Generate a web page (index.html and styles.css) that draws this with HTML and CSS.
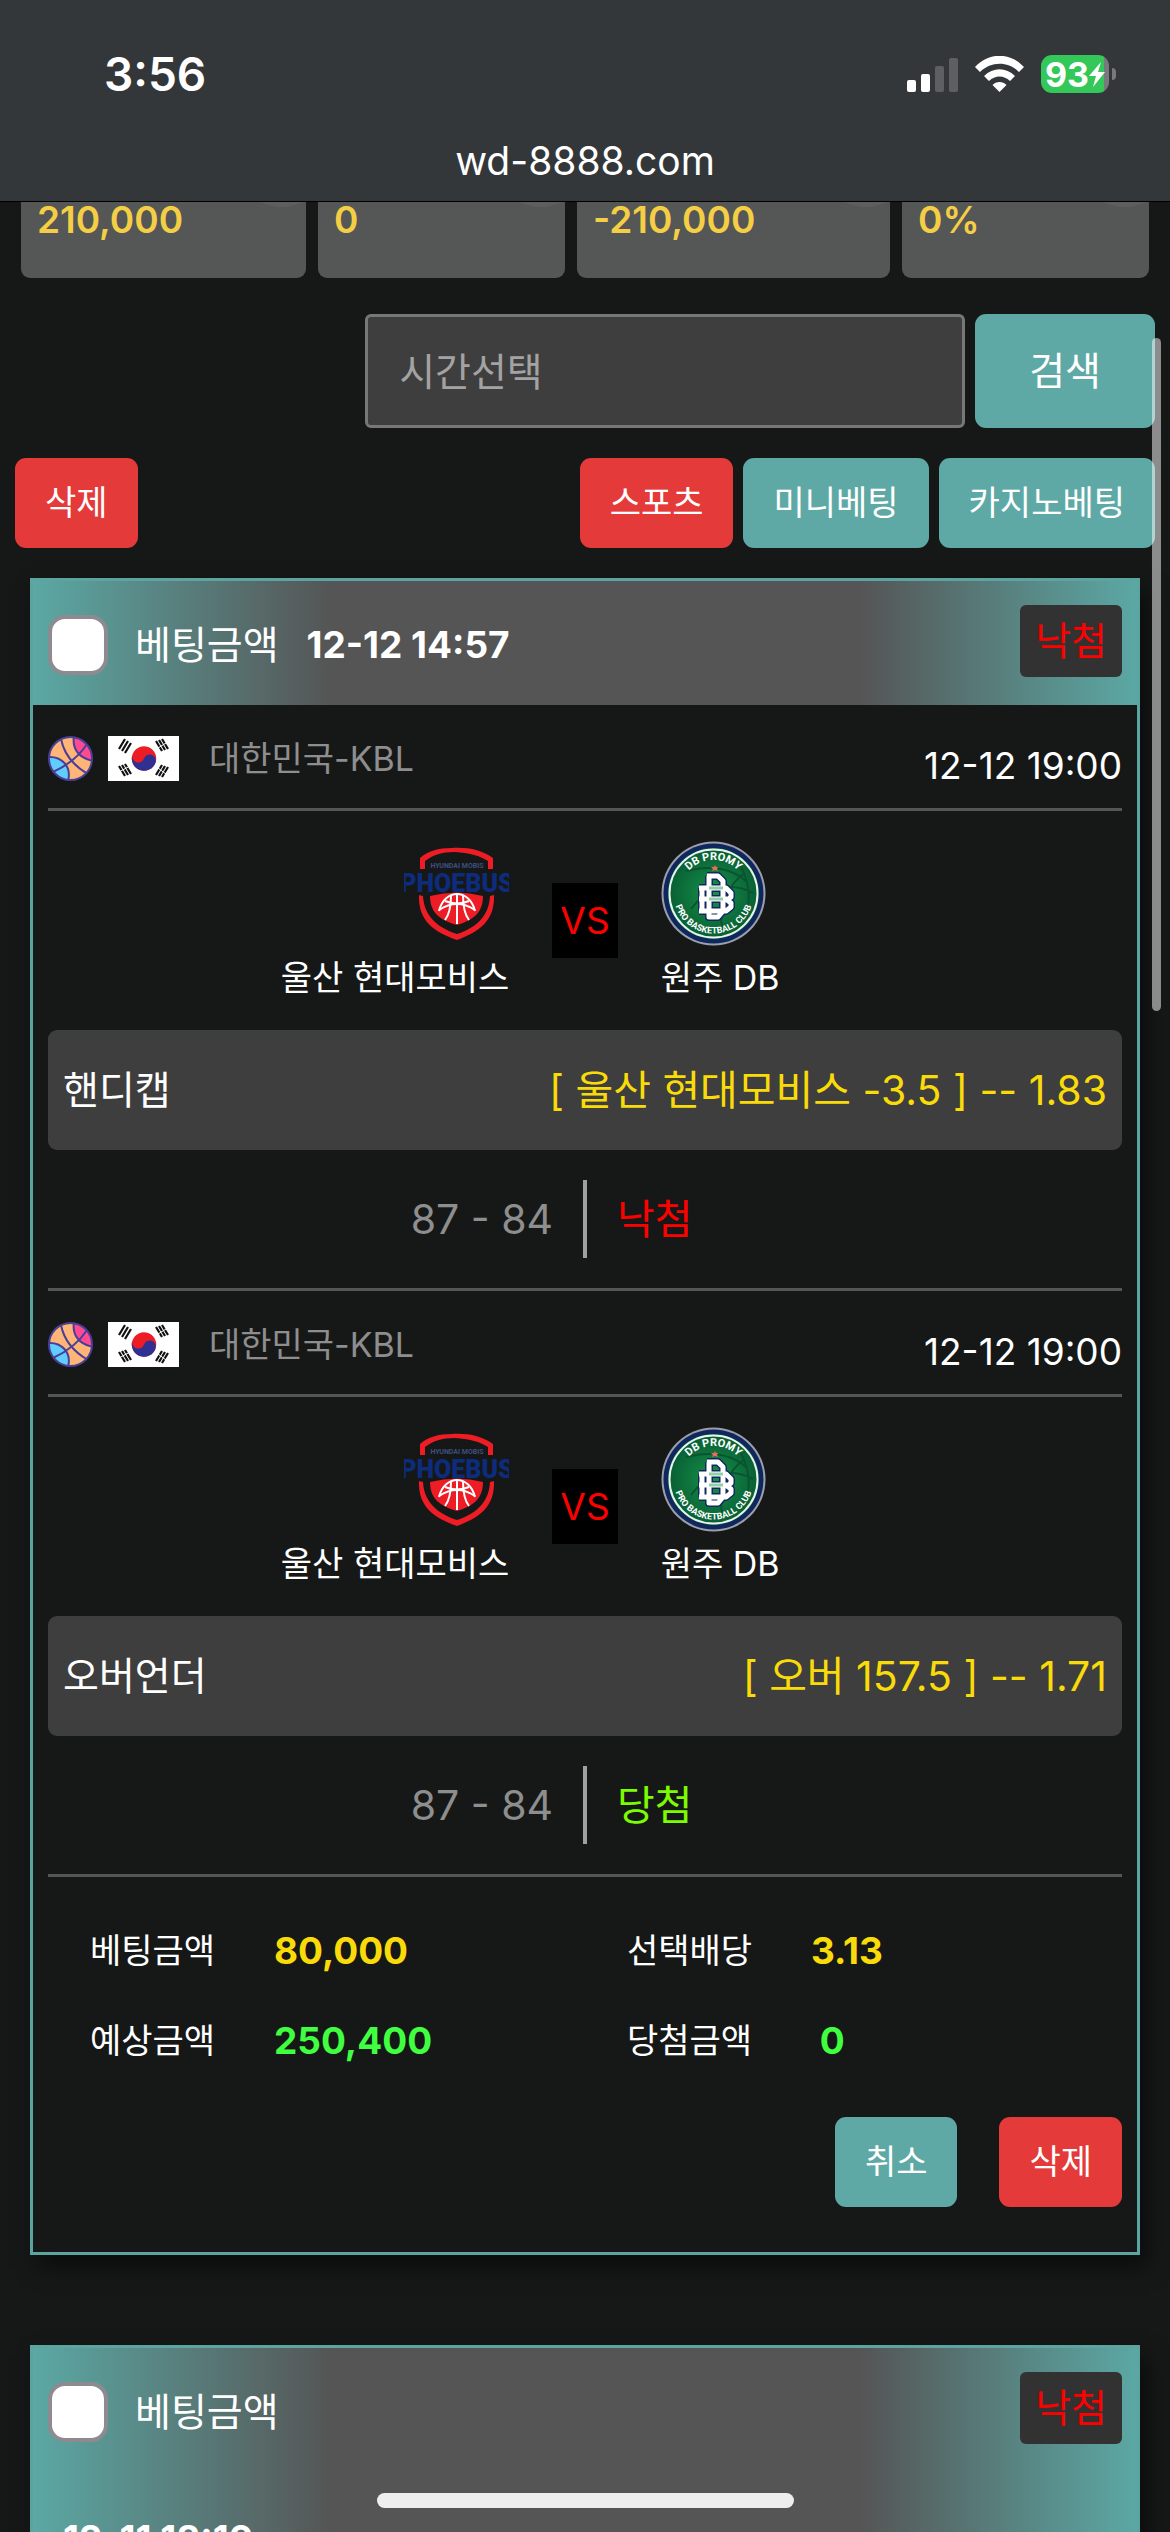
FILE: index.html
```html
<!DOCTYPE html>
<html lang="ko">
<head>
    <meta charset="UTF-8">
    <meta name="viewport" content="width=device-width, initial-scale=1.0">
    <title>베팅내역</title>
    <link rel="stylesheet" href="styles.css">
</head>
<body>

<!-- 아이콘 모음 -->
<svg class="sprite" aria-hidden="true">
    <symbol id="ball" viewBox="0 0 45 45">
        <clipPath id="ballClip"><circle cx="22.500" cy="22.500" r="21.500"/></clipPath>
        <g clip-path="url(#ballClip)">
            <rect width="45" height="45" fill="#ffb478"/>
            <path d="M26 0C24 12 30 22 45 25V0Z" fill="#ff4a93"/>
            <path d="M0 21C13 20 24 30 20 45H0Z" fill="#5fceff"/>
            <g fill="none" stroke="#4a3f96" stroke-width="2">
                <path d="M26 0C24 12 30 22 45 25"/>
                <path d="M0 21C13 20 24 30 20 45"/>
                <path d="M13 3C16 18 26 30 40 38"/>
                <path d="M5 36C18 30 30 22 39 8"/>
            </g>
        </g>
        <circle cx="22.500" cy="22.500" r="21.500" fill="none" stroke="#4a3f96" stroke-width="2"/>
    </symbol>
    <symbol id="flag" viewBox="0 0 71 45">
        <rect width="71" height="45" fill="#fff"/>
        <g transform="rotate(20 36 22.500)">
            <circle cx="36" cy="22.500" r="12.200" fill="#ee1c25"/>
            <path d="M23.800 22.500a6.100 6.100 0 0 0 12.200 0a6.100 6.100 0 0 1 12.200 0a12.200 12.200 0 0 1-24.400 0Z" fill="#2e3192"/>
        </g>
        <g stroke="#111" stroke-width="2.200">
            <path d="M11 13l6-10M14 15l6-10M17 17l6-10"/>
            <path d="M48 5l6 10M51 4l6 10M54 3l6 10"/>
            <path d="M11 30l6 10M14 29l6 10M17 28l6 10"/>
            <path d="M48 39l6-10M51 40l6-10M54 41l6-10"/>
        </g>
        <g stroke="#fff" stroke-width="1">
            <path d="M50 12l8-5M11 36l11-6M50 32l8 6"/>
        </g>
    </symbol>
</svg>

<div class="screen">
    <!-- 상태 표시줄 -->
    <div class="browser-bar">
        <div class="status-bar">
            <span class="status-time">3:56</span>
            <div class="status-icons">
                <svg class="signal" viewBox="0 0 51 36">
                    <rect x="0" y="24" width="9" height="12" rx="2" fill="#fff"/>
                    <rect x="14" y="18" width="9" height="18" rx="2" fill="#fff"/>
                    <rect x="28" y="10" width="9" height="26" rx="2" fill="#5e5f61"/>
                    <rect x="42" y="2" width="9" height="34" rx="2" fill="#5e5f61"/>
                </svg>
                <svg class="wifi" viewBox="0 0 49 36" fill="#fff">
                    <path d="M24.500 36L17.500 29C21 25 28 25 31.500 29Z"/>
                    <path d="M9 20C18 11 31 11 40 20L35 25C29 19 20 19 14 25Z"/>
                    <path d="M0 11C14-4 35-4 49 11L44 16C33 5 16 5 5 16Z"/>
                </svg>
                <div class="battery">
                    <span>93</span>
                    <svg viewBox="0 0 16 25"><path d="M12 0L0 14H7L4 25L16 10H9Z" fill="#fff"/></svg>
                </div>
            </div>
        </div>
        <div class="site-name">wd-8888.com</div>
    </div>

    <!-- 통계 -->
    <div class="stats">
        <div class="stat">210,000</div>
        <div class="stat">0</div>
        <div class="stat">-210,000</div>
        <div class="stat">0%</div>
    </div>

    <form class="search">
        <input class="search-input" type="text" placeholder="시간선택" aria-label="시간선택">
        <button class="btn btn-search" type="button">검색</button>
    </form>

    <div class="toolbar">
        <button class="btn btn-red" type="button">삭제</button>
        <div class="tabs">
            <button class="btn btn-red" type="button">스포츠</button>
            <button class="btn" type="button">미니베팅</button>
            <button class="btn" type="button">카지노베팅</button>
        </div>
    </div>

    <!-- 베팅 카드 -->
    <div class="bet">
        <div class="bet-header">
            <input class="check" type="checkbox" id="bet1">
            <label class="bet-title" for="bet1">베팅금액</label>
            <b class="bet-date">12-12 14:57</b>
            <span class="badge">낙첨</span>
        </div>
        <div class="bet-body">
            <div class="game">
                <div class="league">
                    <svg class="ball"><use href="#ball"/></svg>
                    <svg class="flag"><use href="#flag"/></svg>
                    <span class="league-name">대한민국-KBL</span>
                    <span class="game-date">12-12 19:00</span>
                </div>
                <div class="match">
                    <div class="team team-home">
                        <svg class="logo" viewBox="0 0 105 105">
                            <g id="phoebus">
                                <path d="M16 28V17C24 10 34 7 48 7C64 6 78 9 89 17V28H84V20C70 12 62 12 50 11C38 11 29 14 21 20V28Z" fill="#ee1c25"/>
                                <path d="M15 54l4 1C20 74 32 86 53 93C74 86 85 74 86 55l4-1C91 80 75 91 53 99C30 91 14 80 15 54Z" fill="#ee1c25"/>
                                <path d="M26 55q27-7 53 0C79 71 70 79 53 84C35 79 26 71 26 55Z" fill="#ee1c25"/>
                                <g fill="none" stroke="#fff" stroke-width="2">
                                    <path d="M35 70C38 58 46 53 53 53S68 58 71 70"/>
                                    <path d="M35 69C47 61 59 61 71 69"/>
                                    <path d="M53 53V83M47 54C47 66 45 74 41 79M59 54C59 66 61 74 65 79"/>
                                    <path d="M41 60q12 5 24 0"/>
                                </g>
                                <text class="logo-small" x="53" y="27" text-anchor="middle" font-size="7" fill="#3d4f80">HYUNDAI MOBIS</text>
                                <text class="logo-word" x="53" y="51" text-anchor="middle" font-size="25" fill="#0d2c7c">PHOEBUS</text>
                            </g>
                        </svg>
                        <span>울산 현대모비스</span>
                    </div>
                    <span class="vs">VS</span>
                    <div class="team">
                        <svg class="logo" viewBox="0 0 105 105">
                            <defs>
                                <radialGradient id="promyFill">
                                    <stop offset="0" stop-color="#17914a"/>
                                    <stop offset="1" stop-color="#086034"/>
                                </radialGradient>
                                <path id="ringTop" d="M19 52.500a33.500 33.500 0 0 1 67 0"/>
                                <path id="ringBottom" d="M12.500 52.500a40 40 0 0 0 80 0"/>
                            </defs>
                            <g id="promy">
                                <circle cx="52.500" cy="52.500" r="52" fill="#9a9fab"/>
                                <circle cx="52.500" cy="52.500" r="50" fill="#10265f"/>
                                <circle cx="52.500" cy="52.500" r="45.500" fill="#0b6b3a"/>
                                <circle cx="52.500" cy="52.500" r="44" fill="url(#promyFill)" stroke="#e9f3ec" stroke-width="2"/>
                                <path d="M25 30C45 25 68 25 85 40M30 68C45 47 70 40 92 52M80 26C90 45 90 65 82 77M62 88C55 70 68 42 84 32" fill="none" stroke="#0a5430" stroke-width="2"/>
                                <text class="logo-small" font-size="11" fill="#fff" text-anchor="middle"><textPath href="#ringTop" startOffset="50%">DB PROMY</textPath></text>
                                <text class="logo-small" font-size="9" fill="#fff" text-anchor="middle"><textPath href="#ringBottom" startOffset="50%">PRO BASKETBALL CLUB</textPath></text>
                                <path d="M54 24l1 2h2l-1 2l1 2l-3-1l-3 1l1-2l-2-2h3Z" fill="#ef6a5a"/>
                                <g fill="none" stroke-linejoin="round">
                                    <path d="M46 35H57L62 40V70L57 76H48V35M38 47H65L70 52V56L66 59L70 62V66L65 70H38M41 47V70M38 58H66" stroke="#13295e" stroke-width="8"/>
                                    <path d="M46 35H57L62 40V70L57 76H48V35M38 47H65L70 52V56L66 59L70 62V66L65 70H38M41 47V70M38 58H66" stroke="#fff" stroke-width="5"/>
                                    <path d="M48 47H62M48 58H62" stroke="#8fd0aa" stroke-width="3"/>
                                </g>
                            </g>
                        </svg>
                        <span>원주 DB</span>
                    </div>
                </div>
                <div class="pick">
                    <span>핸디캡</span>
                    <span class="pick-odds">[ 울산 현대모비스 -3.5 ] -- 1.83</span>
                </div>
                <div class="score">
                    <span class="score-num">87 - 84</span>
                    <span class="score-line"></span>
                    <span class="lose">낙첨</span>
                </div>
            </div>
            <div class="game">
                <div class="league">
                    <svg class="ball"><use href="#ball"/></svg>
                    <svg class="flag"><use href="#flag"/></svg>
                    <span class="league-name">대한민국-KBL</span>
                    <span class="game-date">12-12 19:00</span>
                </div>
                <div class="match">
                    <div class="team team-home">
                        <svg class="logo" viewBox="0 0 105 105"><use href="#phoebus"/></svg>
                        <span>울산 현대모비스</span>
                    </div>
                    <span class="vs">VS</span>
                    <div class="team">
                        <svg class="logo" viewBox="0 0 105 105"><use href="#promy"/></svg>
                        <span>원주 DB</span>
                    </div>
                </div>
                <div class="pick">
                    <span>오버언더</span>
                    <span class="pick-odds">[ 오버 157.5 ] -- 1.71</span>
                </div>
                <div class="score">
                    <span class="score-num">87 - 84</span>
                    <span class="score-line"></span>
                    <span class="win">당첨</span>
                </div>
            </div>
            <div class="totals">
                <div class="total"><span>베팅금액</span><b class="yellow">80,000</b></div>
                <div class="total"><span>선택배당</span><b class="yellow">3.13</b></div>
                <div class="total"><span>예상금액</span><b class="green">250,400</b></div>
                <div class="total"><span>당첨금액</span><b class="green">&nbsp;0</b></div>
            </div>
            <div class="actions">
                <button class="btn" type="button">취소</button>
                <button class="btn btn-red" type="button">삭제</button>
            </div>
        </div>
    </div>

    <div class="bet">
        <div class="bet-header bet-header-wrap">
            <input class="check" type="checkbox" id="bet2">
            <label class="bet-title" for="bet2">베팅금액</label>
            <span class="badge">낙첨</span>
            <b class="bet-date">12-11 18:10</b>
        </div>
    </div>

    <div class="scrollbar"></div>
    <div class="home-bar"></div>
</div>

</body>
</html>
```

FILE: styles.css
```css
* {
    box-sizing: border-box;
}
body {
    margin: 0;
    background-color: #161817;
    color: #fff;
    font-family: Inter, "Noto Sans CJK KR", sans-serif;
    font-size: 34px;
}
.sprite {
    position: absolute;
    width: 0;
    height: 0;
}
.screen {
    position: relative;
    height: 100vh;
    overflow: hidden;
}

/* 상단 */
.browser-bar {
    background-color: #33373a;
    border-bottom: 1px solid #000;
    padding-top: 44px;
    height: 202px;
}
.status-bar {
    display: flex;
    justify-content: space-between;
    align-items: center;
    height: 60px;
    padding: 0 55px 0 104px;
}
.status-time {
    font-size: 46px;
    font-weight: 600;
}
.status-icons {
    display: flex;
    align-items: center;
    gap: 17px;
}
.signal {
    width: 51px;
    height: 36px;
}
.wifi {
    width: 49px;
    height: 36px;
}
.battery {
    position: relative;
    display: flex;
    align-items: center;
    justify-content: center;
    width: 68px;
    height: 38px;
    border-radius: 11px;
    background: linear-gradient(to right, #34c759 63px, #77797b 63px);
    font-size: 34px;
    font-weight: 700;
}
.battery svg {
    width: 16px;
    height: 25px;
}
.battery::after {
    content: "";
    position: absolute;
    right: -7px;
    top: 13px;
    width: 4px;
    height: 12px;
    border-radius: 0 6px 6px 0;
    background-color: #77797b;
}
.status-icons {
    padding-right: 6px;
}
.site-name {
    margin-top: 32px;
    line-height: 50px;
    text-align: center;
    font-size: 39px;
}

/* 통계 */
.stats {
    display: grid;
    grid-template-columns: 285fr 247fr 313fr 247fr;
    gap: 12px;
    padding: 0 21px;
}
.stat {
    position: relative;
    overflow: hidden;
    height: 76px;
    padding-left: 16px;
    border-radius: 0 0 9px 9px;
    background-color: #555756;
    color: #f4ce45;
    font-size: 37px;
    font-weight: 600;
    line-height: 36px;
}
.stat::after {
    content: "";
    position: absolute;
    top: -91px;
    right: -24px;
    width: 96px;
    height: 96px;
    border-radius: 50%;
    background-color: rgba(255, 255, 255, 0.05);
}

/* 버튼 */
.btn {
    height: 90px;
    padding: 0 30px;
    border: none;
    border-radius: 11px;
    background-color: #5ea9a5;
    color: #fff;
    font-family: inherit;
    font-size: 34px;
    line-height: 50px;
}
.btn-red {
    background-color: #e43a39;
}
.btn-search {
    height: 114px;
    padding: 0 54px;
    font-size: 39px;
}
.search {
    display: flex;
    justify-content: flex-end;
    gap: 10px;
    margin-top: 36px;
    padding: 0 15px;
}
.search-input {
    width: 600px;
    height: 114px;
    padding: 0 31px;
    border: 3px solid #777;
    border-radius: 6px;
    background-color: #3e3e3e;
    color: #fff;
    font-family: inherit;
    font-size: 39px;
}
.search-input::placeholder {
    color: #a3a3a3;
}
.toolbar {
    display: flex;
    justify-content: space-between;
    margin-top: 30px;
    padding: 0 15px;
}
.tabs {
    display: flex;
    gap: 10px;
}

/* 카드 */
.bet {
    margin: 30px 30px 90px;
    border: 3px solid #5ba4a0;
    box-shadow: 8px 12px 20px rgba(0, 0, 0, 0.5);
}
.bet-header {
    display: flex;
    align-items: center;
    height: 124px;
    padding: 3px 15px 0;
    background: linear-gradient(to right, #5ba8a4, #555 27%, #555 75%, #5ba8a4);
}
.bet-header-wrap {
    flex-wrap: wrap;
    align-content: flex-start;
    height: 300px;
}
.bet-header-wrap .badge {
    margin-bottom: 28px;
}
.bet-header-wrap .bet-date {
    flex-basis: 100%;
    margin-top: 44px;
    margin-left: 15px;
}
.check {
    appearance: none;
    width: 60px;
    height: 60px;
    margin: 0;
    border: 4px solid #8e8b90;
    border-radius: 17px;
    background-color: #fff;
}
.bet-title {
    margin-left: 27px;
    font-size: 39px;
    line-height: 50px;
}
.bet-date {
    margin-left: 28px;
    font-size: 37px;
}
.badge {
    align-self: flex-start;
    margin: 21px 0 0 auto;
    padding: 0 15px;
    border-radius: 6px;
    background-color: #323232;
    color: #f00;
    font-size: 39px;
    line-height: 72px;
}
.bet-body {
    padding: 0 15px 45px;
}
.game {
    border-bottom: 3px solid #555;
}
.league {
    display: flex;
    align-items: center;
    padding: 31px 0 27px;
    border-bottom: 3px solid #555;
}
.ball {
    width: 45px;
    height: 45px;
}
.flag {
    width: 71px;
    height: 45px;
    margin-left: 15px;
}
.league-name {
    margin-left: 30px;
    color: #8e8e8e;
    line-height: 45px;
}
.game-date {
    align-self: flex-end;
    margin-left: auto;
    font-size: 37px;
    line-height: 30px;
}
.match {
    display: grid;
    grid-template-columns: 1fr auto 1fr;
    align-items: center;
    gap: 43px;
    margin-top: 30px;
}
.team {
    display: flex;
    flex-direction: column;
    gap: 10px;
    line-height: 44px;
}
.team-home {
    align-items: flex-end;
}
.logo {
    width: 105px;
    height: 105px;
}
.logo-small {
    font-family: Roboto, sans-serif;
    font-weight: 700;
}
.logo-word {
    font-family: Roboto, sans-serif;
    font-weight: 900;
}
.vs {
    padding: 0 8px;
    background-color: #000;
    color: #f00;
    font-size: 37px;
    line-height: 75px;
}
.pick {
    display: flex;
    justify-content: space-between;
    margin-top: 30px;
    padding: 0 15px;
    border-radius: 9px;
    background-color: #3e3e3e;
    font-size: 39px;
    line-height: 120px;
}
.pick-odds {
    color: #fadb0a;
    font-size: 41px;
}
.score {
    display: grid;
    grid-template-columns: 1fr 4px 1fr;
    gap: 30px;
    margin: 30px 0;
    font-size: 41px;
    line-height: 78px;
}
.score-num {
    text-align: right;
    color: #8e8e8e;
}
.score-line {
    background-color: #a0a0a0;
}
.lose {
    color: #f00;
}
.win {
    color: #7cfc00;
}
.totals {
    display: grid;
    grid-template-columns: 1fr 1fr;
    padding-top: 29px;
}
.total {
    display: flex;
    padding-left: 42px;
    line-height: 90px;
}
.total span {
    width: 184px;
}
.total b {
    font-size: 37px;
}
.yellow {
    color: #fadb0a;
}
.green {
    color: #40ff40;
}
.actions {
    display: flex;
    justify-content: flex-end;
    gap: 42px;
    margin-top: 31px;
}

/* 스크롤바, 홈 표시줄 */
.scrollbar {
    position: absolute;
    top: 338px;
    right: 9px;
    width: 9px;
    height: 673px;
    border-radius: 5px;
    background-color: rgba(255, 255, 255, 0.5);
}
.home-bar {
    position: absolute;
    bottom: 24px;
    left: 50%;
    width: 417px;
    height: 15px;
    margin-left: -208px;
    border-radius: 8px;
    background-color: #eee;
}
```
